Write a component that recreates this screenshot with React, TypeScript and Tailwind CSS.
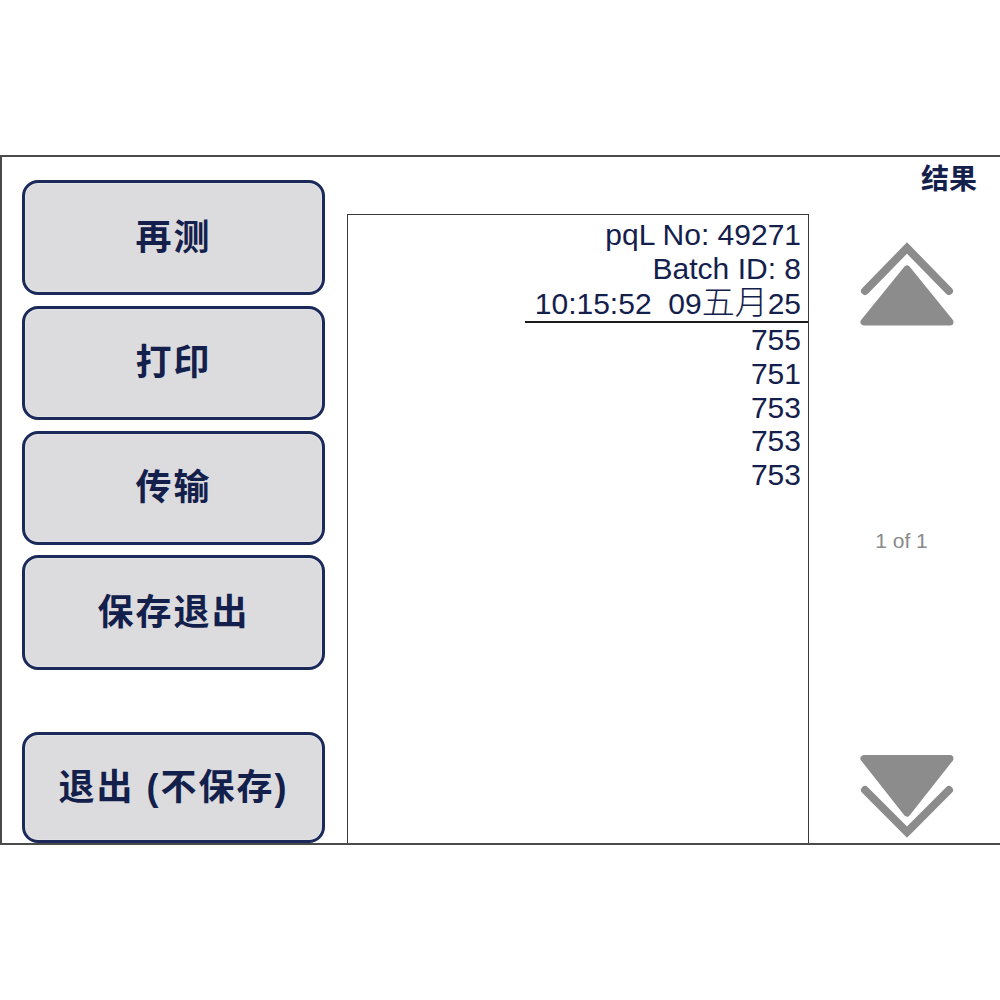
const navy = 'text-[#14204c]'

function ActionButton({ label, className = '' }: { label: string; className?: string }) {
  return (
    <button
      className={`flex w-full items-center justify-center rounded-[16px] border-[3px] border-[#1b2a5a] bg-[#dcdcde] text-[36px] font-bold tracking-[2px] ${navy} shadow-[inset_0_0_2px_rgba(255,255,255,0.8)] ${className}`}
    >
      {label}
    </button>
  )
}

function UpArrow() {
  return (
    <svg width="102" height="92" viewBox="0 0 102 92" className="ml-[5px]">
      <polyline
        points="9,54 51,11 93,54"
        fill="none"
        stroke="#8c8c8c"
        strokeWidth="8"
        strokeLinecap="round"
        strokeLinejoin="miter"
      />
      <polygon
        points="51,32 8,85 94,85"
        fill="#8c8c8c"
        stroke="#8c8c8c"
        strokeWidth="7"
        strokeLinejoin="round"
      />
    </svg>
  )
}

function DownArrow() {
  return (
    <svg width="102" height="92" viewBox="0 0 102 92" className="ml-[5px]">
      <polygon
        points="8,7.5 94,7.5 51,62"
        fill="#8c8c8c"
        stroke="#8c8c8c"
        strokeWidth="7"
        strokeLinejoin="round"
      />
      <polyline
        points="9,39 51,81 93,39"
        fill="none"
        stroke="#8c8c8c"
        strokeWidth="8"
        strokeLinecap="round"
        strokeLinejoin="miter"
      />
    </svg>
  )
}

export default function App() {
  const readings = ['755', '751', '753', '753', '753']

  return (
    <div
      className="h-[1000px] w-[1000px] bg-white pt-[155px]"
      style={{ fontFamily: '"Liberation Sans", "Noto Sans CJK SC", sans-serif' }}
    >
      <div className="flex h-[690px] border-y-2 border-l-2 border-[#4a4a4a]">
        {/* left buttons */}
        <div className="ml-[20px] flex w-[303px] flex-col pt-[23px]">
          <ActionButton label="再测" className="h-[115px]" />
          <ActionButton label="打印" className="mt-[11px] h-[114px]" />
          <ActionButton label="传输" className="mt-[11px] h-[114px]" />
          <ActionButton label="保存退出" className="mt-[10px] h-[115px]" />
          <ActionButton label="退出 (不保存)" className="mt-auto h-[111px]" />
        </div>

        {/* result list */}
        <div className="ml-[22px] mt-[57px] flex w-[462px] flex-col items-end border-x border-t border-[#3a3a3a] text-[30px] leading-[34px] text-[#14204c]">
          <div className="w-[283px] border-b-2 border-[#1a1a1a] pr-[7px] pt-[3px] text-right">
            <div>pqL No: 49271</div>
            <div>Batch ID: 8</div>
            <div className="whitespace-nowrap">
              10:15:52&nbsp;&nbsp;09<span className="text-[33px] font-light">五月</span>25
            </div>
          </div>
          <div className="pr-[7px] text-right leading-[33.8px]">
            {readings.map((r, i) => (
              <div key={i}>{r}</div>
            ))}
          </div>
        </div>

        {/* right column */}
        <div className="flex flex-1 flex-col items-center">
          <div className="mt-[8px] self-end pr-[23px] text-[28px] font-bold leading-[30px] text-[#14204c]">
            结果
          </div>
          <div className="mt-[42px]">
            <UpArrow />
          </div>
          <div className="mr-[6px] mt-[200px] text-[21px] leading-[24px] text-[#8a8a8a]">1 of 1</div>
          <div className="mt-auto">
            <DownArrow />
          </div>
        </div>
      </div>
    </div>
  )
}
